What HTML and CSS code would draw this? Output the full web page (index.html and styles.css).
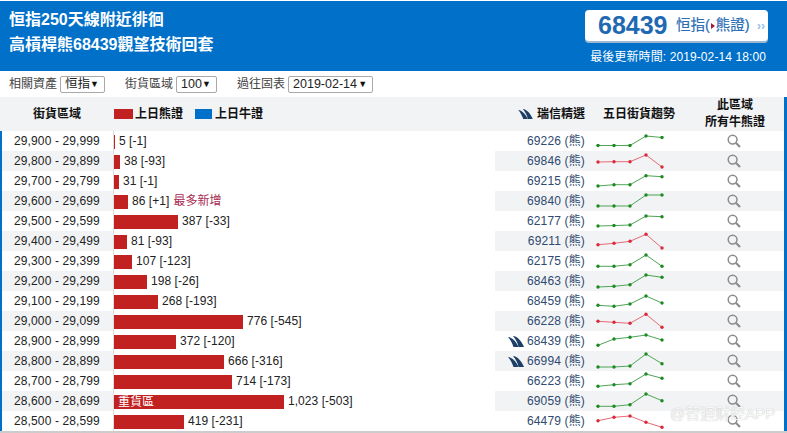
FILE: index.html
```html
<!DOCTYPE html>
<html lang="zh-Hant">
<head>
<meta charset="utf-8">
<title>恒指250天線附近徘徊</title>
<link rel="stylesheet" href="styles.css">
</head>
<body>
<svg class="defs" width="0" height="0" aria-hidden="true">
<defs>
<marker id="dg" markerUnits="userSpaceOnUse" markerWidth="4" markerHeight="4" refX="2" refY="2"><circle cx="2" cy="2" r="1.7" fill="#1c8a22"/></marker>
<marker id="dr" markerUnits="userSpaceOnUse" markerWidth="4" markerHeight="4" refX="2" refY="2"><circle cx="2" cy="2" r="1.7" fill="#d92a3c"/></marker>
<symbol id="sail" viewBox="0 0 16 11"><path d="M0 1C4 1.500 8 5 10.500 11H5.500C4.500 7.500 2.500 4 0 1Z"/><path d="M5 0C9.500 .5 13.500 5 16 11H10.500C9.800 7 7.800 3 5 0Z"/></symbol>
<symbol id="lens" viewBox="0 0 14 14"><circle cx="5.6" cy="5.6" r="4.4" fill="none" stroke="#8c8c8c" stroke-width="1.5"/><path d="M8.8 8.8 13 13" stroke="#8c8c8c" stroke-width="2.1" fill="none"/></symbol>
</defs>
</svg>
<div class="page">
  <header class="top">
    <div class="title">
      <div>恒指250天線附近徘徊</div>
      <div>高槓桿熊68439觀望技術回套</div>
    </div>
    <div class="quote">
      <div class="badge">
        <span class="code">68439</span>
        <span class="under">恒指(<i class="tri"></i>熊證)</span>
        <span class="more">››</span>
      </div>
      <div class="updated">最後更新時間: 2019-02-14 18:00</div>
    </div>
  </header>

  <div class="filters">
    <label class="f f1">相關資產 <span class="sel s1">恒指<b>▼</b></span></label>
    <label class="f">街貨區域 <span class="sel s2">100<b>▼</b></span></label>
    <label class="f">過往固表 <span class="sel s3">2019-02-14<b>▼</b></span></label>
  </div>

  <div class="row head">
    <div class="range">街貨區域</div>
    <div class="bars legend">
      <i class="sq red"></i><span class="l1">上日熊證</span>
      <i class="sq blue"></i><span>上日牛證</span>
    </div>
    <div class="right">
      <div class="pick"><svg class="sail small"><use href="#sail"/></svg>瑞信精選</div>
      <div class="trend">五日街貨趨勢</div>
      <div class="search">此區域<br>所有牛熊證</div>
    </div>
  </div>

  <div class="row"><div class="range">29,900 - 29,999</div><div class="bars"><i class="bar" style="width:1px"></i>5 [-1]</div><div class="right"><div class="pick">69226 (熊)</div><div class="trend"><svg class="spark"><polyline class="g" points="13,14.5 29,14.5 45,14.5 61,5 77,6.5" marker-start="url(#dg)" marker-mid="url(#dg)" marker-end="url(#dg)"/></svg></div><div class="search"><svg class="lens"><use href="#lens"/></svg></div></div></div>
  <div class="row alt"><div class="range">29,800 - 29,899</div><div class="bars"><i class="bar" style="width:6px"></i>38 [-93]</div><div class="right"><div class="pick">69846 (熊)</div><div class="trend"><svg class="spark"><polyline class="r" points="13,11 29,10.7 45,10.7 61,4 77,16" marker-start="url(#dr)" marker-mid="url(#dr)" marker-end="url(#dr)"/></svg></div><div class="search"><svg class="lens"><use href="#lens"/></svg></div></div></div>
  <div class="row"><div class="range">29,700 - 29,799</div><div class="bars"><i class="bar" style="width:5px"></i>31 [-1]</div><div class="right"><div class="pick">69215 (熊)</div><div class="trend"><svg class="spark"><polyline class="g" points="13,15 29,13.7 45,13.7 61,4.7 77,5.7" marker-start="url(#dg)" marker-mid="url(#dg)" marker-end="url(#dg)"/></svg></div><div class="search"><svg class="lens"><use href="#lens"/></svg></div></div></div>
  <div class="row alt"><div class="range">29,600 - 29,699</div><div class="bars"><i class="bar" style="width:14px"></i>86 [+1]<span class="new">最多新增</span></div><div class="right"><div class="pick">69840 (熊)</div><div class="trend"><svg class="spark"><polyline class="g" points="13,15 29,15 45,15 61,4 77,4" marker-start="url(#dg)" marker-mid="url(#dg)" marker-end="url(#dg)"/></svg></div><div class="search"><svg class="lens"><use href="#lens"/></svg></div></div></div>
  <div class="row"><div class="range">29,500 - 29,599</div><div class="bars"><i class="bar" style="width:64px"></i>387 [-33]</div><div class="right"><div class="pick">62177 (熊)</div><div class="trend"><svg class="spark"><polyline class="g" points="13,15 29,14.6 45,14 61,5 77,5.7" marker-start="url(#dg)" marker-mid="url(#dg)" marker-end="url(#dg)"/></svg></div><div class="search"><svg class="lens"><use href="#lens"/></svg></div></div></div>
  <div class="row alt"><div class="range">29,400 - 29,499</div><div class="bars"><i class="bar" style="width:13px"></i>81 [-93]</div><div class="right"><div class="pick">69211 (熊)</div><div class="trend"><svg class="spark"><polyline class="r" points="13,13.7 29,12.3 45,10.3 61,3.3 77,17" marker-start="url(#dr)" marker-mid="url(#dr)" marker-end="url(#dr)"/></svg></div><div class="search"><svg class="lens"><use href="#lens"/></svg></div></div></div>
  <div class="row"><div class="range">29,300 - 29,399</div><div class="bars"><i class="bar" style="width:18px"></i>107 [-123]</div><div class="right"><div class="pick">62175 (熊)</div><div class="trend"><svg class="spark"><polyline class="g" points="13,15.3 29,15.3 45,13.7 61,4 77,15.3" marker-start="url(#dg)" marker-mid="url(#dg)" marker-end="url(#dg)"/></svg></div><div class="search"><svg class="lens"><use href="#lens"/></svg></div></div></div>
  <div class="row alt"><div class="range">29,200 - 29,299</div><div class="bars"><i class="bar" style="width:33px"></i>198 [-26]</div><div class="right"><div class="pick">68463 (熊)</div><div class="trend"><svg class="spark"><polyline class="g" points="13,16 29,15.3 45,13.7 61,4 77,6.3" marker-start="url(#dg)" marker-mid="url(#dg)" marker-end="url(#dg)"/></svg></div><div class="search"><svg class="lens"><use href="#lens"/></svg></div></div></div>
  <div class="row"><div class="range">29,100 - 29,199</div><div class="bars"><i class="bar" style="width:44px"></i>268 [-193]</div><div class="right"><div class="pick">68459 (熊)</div><div class="trend"><svg class="spark"><polyline class="g" points="13,14.3 29,15.3 45,13 61,5 77,12" marker-start="url(#dg)" marker-mid="url(#dg)" marker-end="url(#dg)"/></svg></div><div class="search"><svg class="lens"><use href="#lens"/></svg></div></div></div>
  <div class="row alt"><div class="range">29,000 - 29,099</div><div class="bars"><i class="bar" style="width:129px"></i>776 [-545]</div><div class="right"><div class="pick">66228 (熊)</div><div class="trend"><svg class="spark"><polyline class="r" points="13,10.3 29,11.3 45,12.3 61,3.3 77,16.3" marker-start="url(#dr)" marker-mid="url(#dr)" marker-end="url(#dr)"/></svg></div><div class="search"><svg class="lens"><use href="#lens"/></svg></div></div></div>
  <div class="row"><div class="range">28,900 - 28,999</div><div class="bars"><i class="bar" style="width:62px"></i>372 [-120]</div><div class="right"><div class="pick"><svg class="sail"><use href="#sail"/></svg>68439 (熊)</div><div class="trend"><svg class="spark"><polyline class="g" points="13,14.3 29,8 45,6.3 61,4 77,9" marker-start="url(#dg)" marker-mid="url(#dg)" marker-end="url(#dg)"/></svg></div><div class="search"><svg class="lens"><use href="#lens"/></svg></div></div></div>
  <div class="row alt"><div class="range">28,800 - 28,899</div><div class="bars"><i class="bar" style="width:110px"></i>666 [-316]</div><div class="right"><div class="pick"><svg class="sail"><use href="#sail"/></svg>66994 (熊)</div><div class="trend"><svg class="spark"><polyline class="g" points="13,16 29,16 45,15 61,3 77,12.7" marker-start="url(#dg)" marker-mid="url(#dg)" marker-end="url(#dg)"/></svg></div><div class="search"><svg class="lens"><use href="#lens"/></svg></div></div></div>
  <div class="row"><div class="range">28,700 - 28,799</div><div class="bars"><i class="bar" style="width:118px"></i>714 [-173]</div><div class="right"><div class="pick">66223 (熊)</div><div class="trend"><svg class="spark"><polyline class="g" points="13,15.3 29,13.7 45,12.7 61,3 77,7.3" marker-start="url(#dg)" marker-mid="url(#dg)" marker-end="url(#dg)"/></svg></div><div class="search"><svg class="lens"><use href="#lens"/></svg></div></div></div>
  <div class="row alt"><div class="range">28,600 - 28,699</div><div class="bars"><i class="bar heavy" style="width:170px">重貨區</i>1,023 [-503]</div><div class="right"><div class="pick">69059 (熊)</div><div class="trend"><svg class="spark"><polyline class="g" points="13,15.3 29,15.3 45,13.7 61,3 77,9.7" marker-start="url(#dg)" marker-mid="url(#dg)" marker-end="url(#dg)"/></svg></div><div class="search"><svg class="lens"><use href="#lens"/></svg></div></div></div>
  <div class="row"><div class="range">28,500 - 28,599</div><div class="bars"><i class="bar" style="width:70px"></i>419 [-231]</div><div class="right"><div class="pick">64479 (熊)</div><div class="trend"><svg class="spark"><polyline class="r" points="13,9.7 29,6.3 45,5 61,11.3 77,16.3" marker-start="url(#dr)" marker-mid="url(#dr)" marker-end="url(#dr)"/></svg></div><div class="search"><svg class="lens"><use href="#lens"/></svg></div></div></div>
  <div class="foot"></div>
  <div class="mark">@智通财经APP</div>
</div>
</body>
</html>
```

FILE: styles.css
```css
html, body { margin: 0; padding: 0; background: #fff; }
body { padding-top: 1px; font: 12px/16px "Liberation Sans", "Noto Sans CJK TC", sans-serif; color: #222; overflow: hidden; }
.defs { display: block; height: 0; }
.page { position: relative; width: 787px; height: 432px; overflow: hidden; }

.top { height: 70px; background: #0070c9; color: #fff; display: flex; justify-content: space-between; box-sizing: border-box; padding: 6px 19px 0 9px; }
.title { font-size: 16px; font-weight: 700; line-height: 25px; }
.quote { display: flex; flex-direction: column; align-items: flex-end; padding-top: 3px; }
.badge { width: 183px; height: 31px; box-sizing: border-box; background: #fff; border-radius: 4px; box-shadow: 0 2px 0 #9db8d0; display: flex; align-items: center; padding-left: 13px; color: #2a6db5; }
.code { font-size: 25px; font-weight: 700; line-height: 31px; color: #1f69b3; width: 78px; }
.under { font-size: 14.5px; line-height: 31px; color: #2a6db5; width: 81px; white-space: nowrap; -webkit-text-stroke: .2px #2a6db5; }
.tri { display: inline-block; border-left: 4px solid #a01a3a; border-top: 3px solid transparent; border-bottom: 3px solid transparent; margin: 0 1px 1px 1px; vertical-align: middle; }
.more { font-size: 12px; color: #8fc0e8; font-weight: 700; letter-spacing: 0; }
.updated { margin-top: 8px; font-size: 12px; line-height: 16px; margin-right: 2px; letter-spacing: .1px; white-space: nowrap; }

.filters { height: 26px; display: flex; align-items: center; padding-left: 9px; color: #444; margin-right: 3px; }
.f { display: flex; align-items: center; gap: 3px; margin-right: 20px; }
.sel { box-sizing: border-box; height: 17px; border: 1px solid #a9a9a9; border-radius: 2px; display: flex; justify-content: space-between; align-items: center; padding: 0 5px 0 4px; color: #222; font-size: 12.5px; background: #fff; }
.sel b { font-size: 9px; font-weight: 400; color: #111; }
.s1 { width: 45px; }
.s2 { width: 41px; }
.s3 { width: 85px; }

.row { display: flex; height: 20px; align-items: stretch; border-left: 2px solid #0070c9; border-right: 3px solid #0070c9; }
.range { width: 112px; flex: none; box-sizing: border-box; padding-left: 12px; line-height: 20px; border-right: 1px solid #ddd; letter-spacing: .12px; white-space: nowrap; }
.bars { width: 381px; flex: none; display: flex; align-items: center; gap: 4px; white-space: nowrap; line-height: 20px; letter-spacing: .05px; }
.bar { display: block; height: 14px; margin-top: 2px; background: #c12121; }
.heavy { color: #fff; font-style: normal; font-size: 12px; line-height: 14px; padding-left: 4px; box-sizing: border-box; }
.new { color: #a82a50; }
.right { flex: 1; display: flex; }
.pick { width: 90px; flex: none; display: flex; justify-content: flex-end; align-items: center; color: #2f4a6f; line-height: 20px; white-space: nowrap; letter-spacing: .15px; }
.trend { width: 90px; flex: none; }
.search { flex: 1; padding-left: 9px; box-sizing: border-box; display: flex; justify-content: center; align-items: center; text-align: center; }
.spark { display: block; width: 90px; height: 20px; }
.spark polyline { fill: none; stroke-width: 1; }
.g { stroke: #4fa555; }
.r { stroke: #e86a76; }
.lens { display: block; width: 14px; height: 14px; }
.sail { display: block; width: 16px; height: 11px; margin-right: 3px; fill: #1d3f66; }
.small { width: 15px; height: 10px; margin-right: 4px; }
.alt .range, .alt .right { background: #f2f3f5; }

.head { height: 34px; border-left: 1px solid #f2f3f5; border-right: 3px solid #0070c9; font-weight: 700; color: #111; background: #f2f3f5; margin: 0; }
.head .range { width: 113px; padding-left: 32px; line-height: 34px; border: 0; letter-spacing: 0; }
.head .pick { line-height: 16px; letter-spacing: 0; color: #111; }
.head .trend { text-align: center; line-height: 34px; white-space: nowrap; padding-left: 18px; box-sizing: border-box; }
.head .search { line-height: 17px; padding-left: 11px; }
.legend { gap: 2px; letter-spacing: 0; }
.sq { display: block; width: 19px; height: 10px; }
.red { background: #c12121; }
.blue { background: #0070c9; width: 17px; margin-right: 1px; }
.l1 { margin-right: 10px; }

.foot { height: 2px; background: #ccc; }
.mark { position: absolute; left: 670px; top: 403px; font-size: 15px; line-height: 20px; color: rgba(255,255,255,.92); text-shadow: 0 0 1px rgba(150,150,150,.8); white-space: nowrap; }
```
